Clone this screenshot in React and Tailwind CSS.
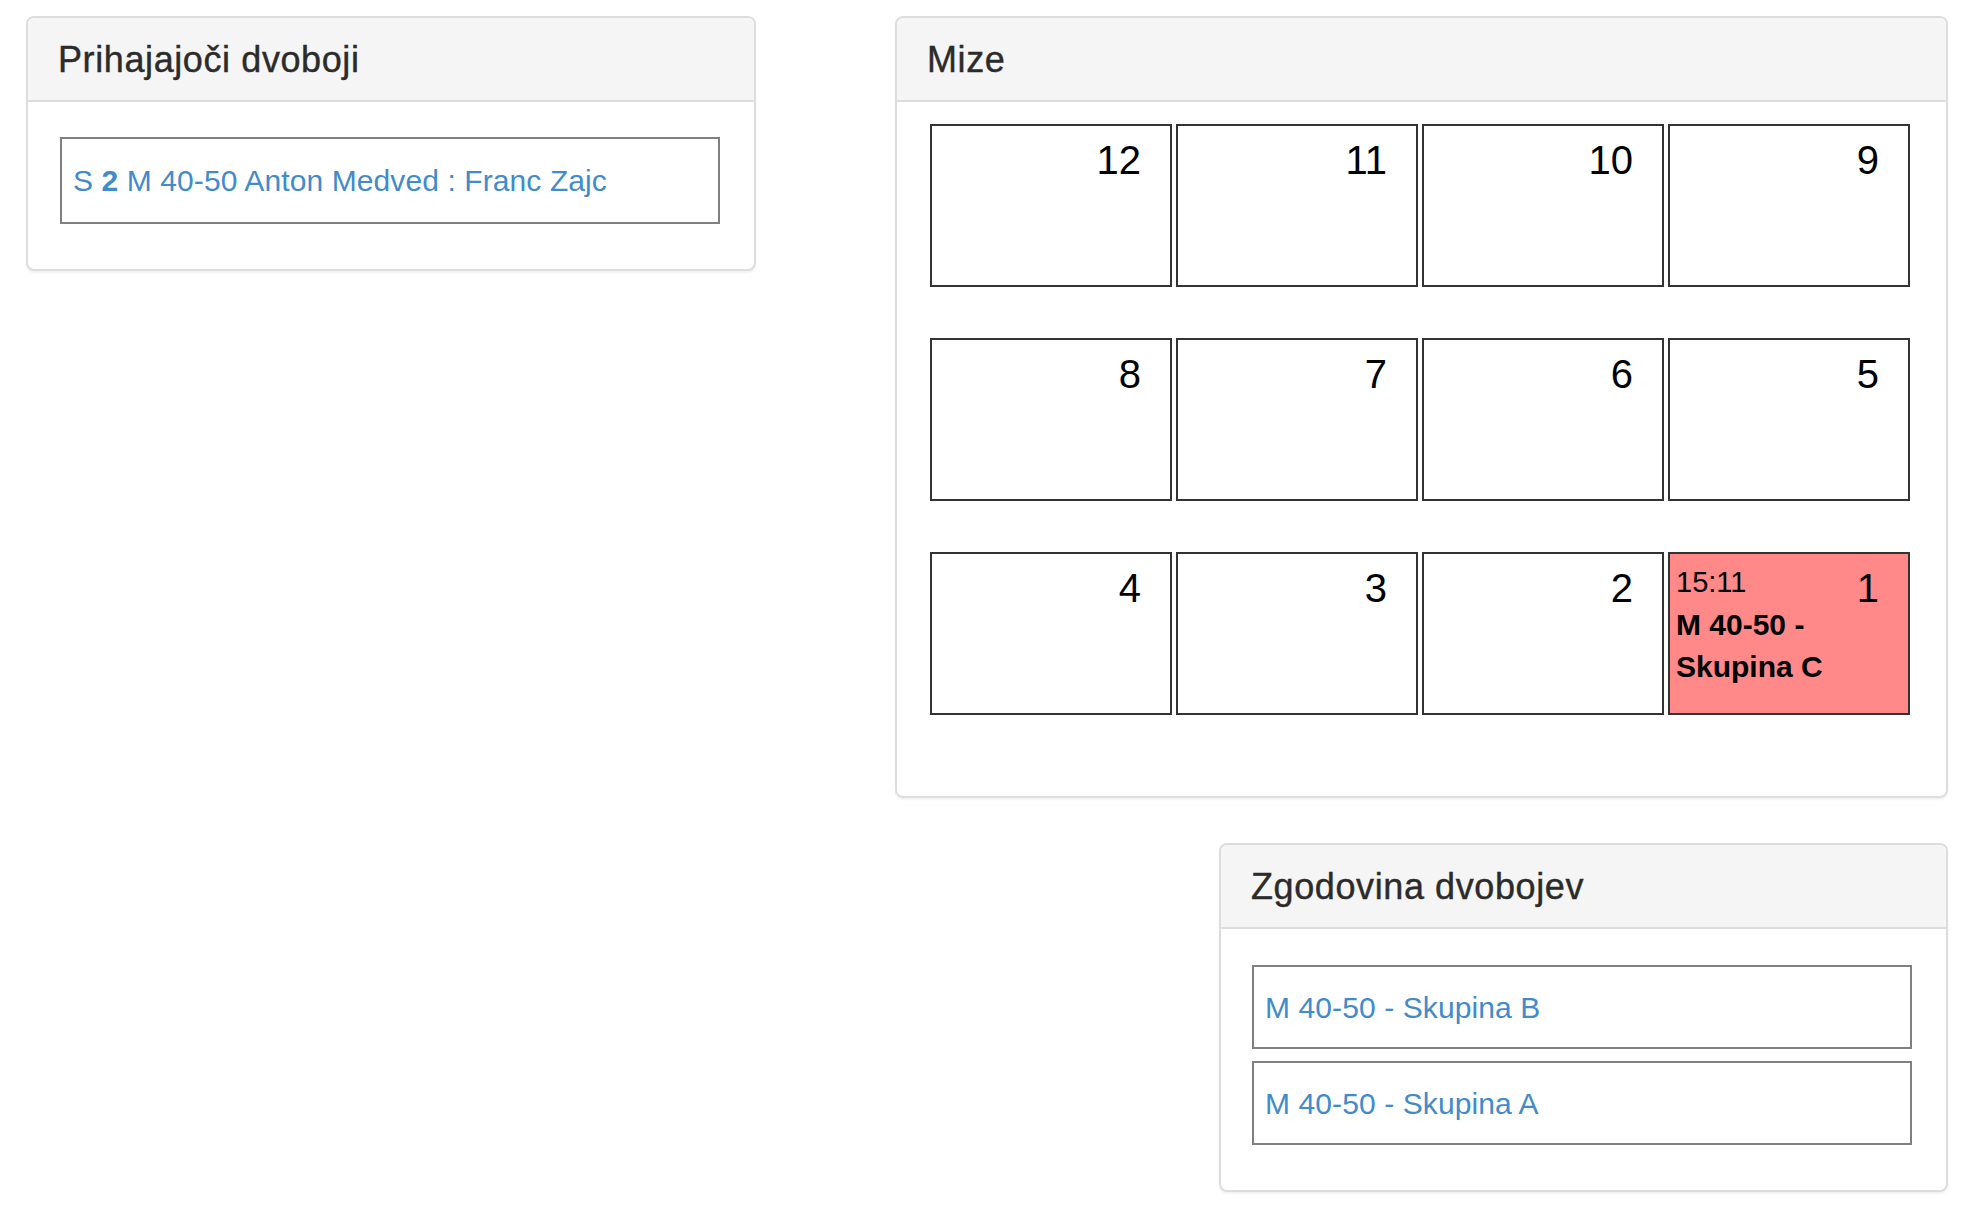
const tables = [
  [12, 11, 10, 9],
  [8, 7, 6, 5],
  [4, 3, 2, 1],
];

// table 1 is busy right now
const busy = {
  1: { time: '15:11', lines: ['M 40-50 -', 'Skupina C'] },
};

const history = ['M 40-50 - Skupina B', 'M 40-50 - Skupina A'];

const Panel = ({ title, className = '', children }) => (
  <section
    className={`overflow-hidden rounded-[8px] border-2 border-[#dddddd] bg-white shadow-[0_2px_2px_rgba(0,0,0,0.05)] ${className}`}
  >
    <div className="flex h-[84px] items-center border-b-2 border-[#dddddd] bg-[#f5f5f5] pl-[30px] pt-[2px]">
      <h3 className="text-[36px] leading-none tracking-[0.6px] text-[#2b2b2b] [-webkit-text-stroke:0.4px_#2b2b2b]">
        {title}
      </h3>
    </div>
    {children}
  </section>
);

const TableCell = ({ number }) => {
  const match = busy[number];

  return (
    <div
      className={`flex h-[163px] justify-between border-2 border-[#333333] ${match ? 'bg-[#ff8888]' : 'bg-white'}`}
    >
      <div className="pl-[6px] pt-[7px] text-[29px] leading-[42.5px] text-black">
        {match && (
          <>
            <div>{match.time}</div>
            {match.lines.map((line) => (
              <div key={line} className="text-[30px] font-bold">
                {line}
              </div>
            ))}
          </>
        )}
      </div>
      <div className="pr-[29px] pt-[14px] text-[40px] leading-none text-black">{number}</div>
    </div>
  );
};

const App = () => {
  return (
    <div className="flex min-h-screen justify-between bg-white pl-[26px] pr-[24px] pt-[16px] font-['Liberation_Sans',Arial,sans-serif]">
      <div className="w-[730px] shrink-0">
        <Panel title="Prihajajoči dvoboji">
          <div className="pb-[45px] pl-[32px] pr-[34px] pt-[35px]">
            <a
              href="#"
              className="flex h-[87px] items-center border-2 border-[#808080] pl-[11px] text-[30px] tracking-[0.1px] text-[#428bca]"
            >
              <span>
                S <b>2</b> M 40-50 Anton Medved : Franc Zajc
              </span>
            </a>
          </div>
        </Panel>
      </div>

      <div className="flex w-[1053px] shrink-0 flex-col items-end">
        <Panel title="Mize" className="w-full">
          <div className="flex flex-col gap-[51px] pb-[81px] pl-[33px] pr-[36px] pt-[22px]">
            {tables.map((row) => (
              <div key={row.join('-')} className="grid grid-cols-4 gap-[4px]">
                {row.map((n) => (
                  <TableCell key={n} number={n} />
                ))}
              </div>
            ))}
          </div>
        </Panel>

        <Panel title="Zgodovina dvobojev" className="mt-[45px] w-[729px]">
          <div className="flex flex-col gap-[12px] pb-[45px] pl-[31px] pr-[34px] pt-[36px]">
            {history.map((item) => (
              <a
                key={item}
                href="#"
                className="flex h-[84px] items-center border-2 border-[#808080] pl-[11px] text-[30px] tracking-[0.1px] text-[#428bca]"
              >
                {item}
              </a>
            ))}
          </div>
        </Panel>
      </div>
    </div>
  );
};

export default App;
